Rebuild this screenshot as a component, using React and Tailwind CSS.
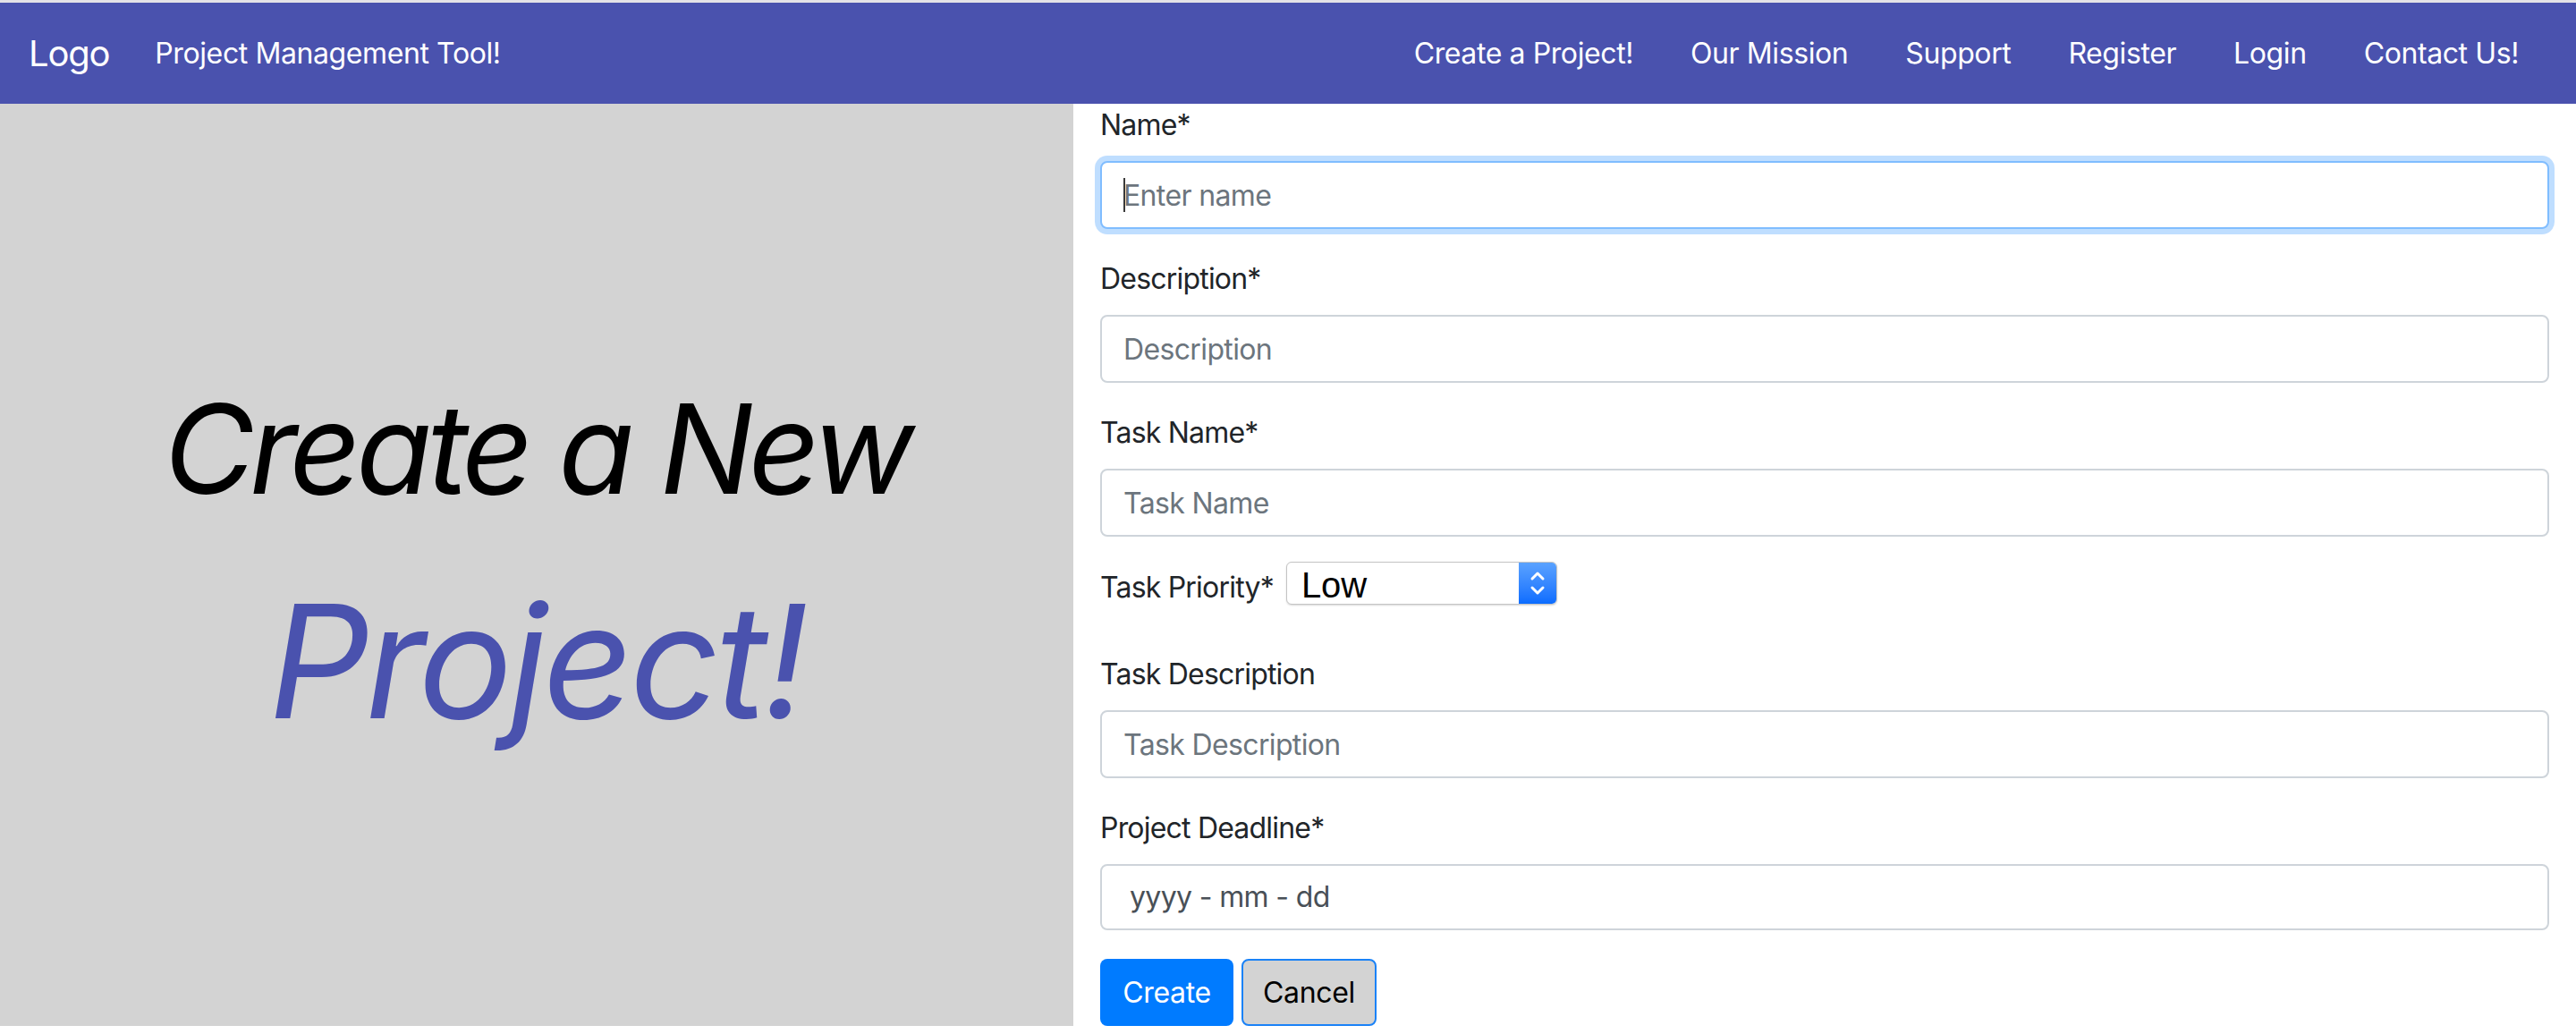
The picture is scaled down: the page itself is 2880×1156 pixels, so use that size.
import React from "react";

const links = ["Create a Project!", "Our Mission", "Support", "Register", "Login", "Contact Us!"];

const Field = ({ label, placeholder, focused }) => (
  <div className="mb-8">
    <label className="block text-[32px] leading-[48px] tracking-[-0.025em] text-[#212529] mb-4">{label}</label>
    <div className="relative">
      <input
        readOnly
        placeholder={placeholder}
        className={
          focused
            ? "block w-full h-[76px] rounded-lg border-2 border-[#80bdff] bg-white px-6 text-[32px] tracking-[-0.02em] text-[#495057] outline-none placeholder:text-[#6c757d] shadow-[0_0_0_6px_rgba(0,123,255,0.25)]"
            : "block w-full h-[76px] rounded-lg border-2 border-[#ced4da] bg-white px-6 text-[32px] tracking-[-0.02em] text-[#495057] outline-none placeholder:text-[#6c757d]"
        }
      />
      {focused && <span className="absolute left-[26px] top-[19px] h-[38px] w-[2px] bg-[#3a3a3a]" />}
    </div>
  </div>
);

export default function App() {
  return (
    <div className="min-h-screen bg-white font-['Inter',sans-serif]">
      <div className="h-[3px] bg-[#e4e2e7]" />
      <nav className="h-[113px] bg-[#4a52ae] flex items-center px-8 text-white tracking-[-0.025em]">
        <span className="text-[40px] mr-[51px] tracking-[-0.03em]">Logo</span>
        <span className="text-[32px]">Project Management Tool!</span>
        <div className="ml-auto flex">
          {links.map((l) => (
            <a key={l} className="px-8 text-[32px] text-white">
              {l}
            </a>
          ))}
        </div>
      </nav>

      <div className="flex">
        {/* left banner */}
        <div className="w-[1200px] shrink-0 bg-[#d3d3d3] flex flex-col items-center justify-center gap-[80px] pb-[4px] italic">
          <h1 className="text-[139px] leading-none text-black tracking-[-0.04em]">Create a New</h1>
          <h1 className="text-[176px] leading-none text-[#4a52ae] tracking-[-0.025em]">Project!</h1>
        </div>

        {/* form */}
        <form className="flex-1 px-[30px]">
          <Field label="Name*" placeholder="Enter name" focused />
          <Field label="Description*" placeholder="Description" />
          <Field label="Task Name*" placeholder="Task Name" />

          <div className="flex items-start h-[48px] mt-[-4px] mb-[54px]">
            <span className="text-[32px] leading-[48px] pt-[5px] tracking-[-0.025em] text-[#212529]">Task Priority*</span>
            <div className="ml-[14px] flex h-[48px] w-[303px] rounded-md border border-[#c4c4c4] bg-white shadow-[0_1px_2px_rgba(0,0,0,0.15)] overflow-hidden">
              <span className="flex-1 pl-4 pt-[2px] text-[40px] leading-[46px] text-black font-['Liberation_Sans',sans-serif]">Low</span>
              <span className="w-[42px] flex items-center justify-center bg-gradient-to-b from-[#5aa2ff] to-[#0a6cff]">
                <svg width="20" height="32" viewBox="0 0 20 32" fill="none" stroke="white" strokeWidth="3" strokeLinecap="round" strokeLinejoin="round">
                  <path d="M4 11 L10 5 L16 11" />
                  <path d="M4 21 L10 27 L16 21" />
                </svg>
              </span>
            </div>
          </div>

          <Field label="Task Description" placeholder="Task Description" />

          <div className="mb-8">
            <label className="block text-[32px] leading-[48px] tracking-[-0.025em] text-[#212529] mb-4">Project Deadline*</label>
            <div className="h-[74px] rounded-lg border-2 border-[#ced4da] bg-white pl-[31px] flex items-center text-[32px] tracking-[-0.02em] text-[#495057]">
              yyyy - mm - dd
            </div>
          </div>

          <div className="flex gap-[9px] tracking-[-0.02em]">
            <button type="button" className="h-[75px] w-[149px] rounded-lg bg-[#007bff] text-white text-[32px]">
              Create
            </button>
            <button type="button" className="h-[75px] w-[151px] rounded-lg bg-[#d3d3d3] border-2 border-[#1a82f7] text-black text-[32px]">
              Cancel
            </button>
          </div>
        </form>
      </div>
    </div>
  );
}
